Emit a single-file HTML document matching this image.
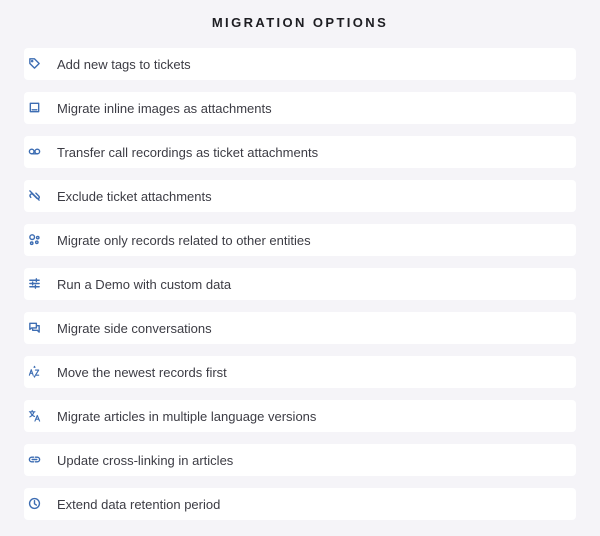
<!DOCTYPE html>
<html><head><style>
body{margin:0;width:600px;height:536px;background:#f5f4f8;font-family:"Liberation Sans",sans-serif;overflow:hidden}
h1{margin:0;position:absolute;top:15px;left:0;width:600px;text-align:center;font-size:13px;font-weight:bold;letter-spacing:2.4px;color:#1d1d22}
.row{position:absolute;left:24px;width:552px;height:32px;background:#fff;border-radius:4px}
.row svg{position:absolute;left:4px;top:9px;width:13px;height:13px}
.row span{position:absolute;left:33px;top:9px;font-size:13px;color:#3c3c44}
svg *{stroke:#3d6db3;fill:none;stroke-width:1.5;stroke-linecap:round;stroke-linejoin:round}
</style></head><body>
<h1>MIGRATION OPTIONS</h1>
<div class="row" style="top:48px"><svg viewBox="0 0 14 14"><path d="M2 2h5l5 5-5 5-5-5z"/><circle cx="4.5" cy="4.5" r=".6"/></svg><span>Add new tags to tickets</span></div>
<div class="row" style="top:92px"><svg viewBox="0 0 14 14"><rect x="2.5" y="2.5" width="9" height="9"/><path d="M4.5 9.5h5" /></svg><span>Migrate inline images as attachments</span></div>
<div class="row" style="top:136px"><svg viewBox="0 0 14 14"><circle cx="4" cy="7" r="2.5"/><circle cx="10" cy="7" r="2.5"/><path d="M4 9.5h6"/></svg><span>Transfer call recordings as ticket attachments</span></div>
<div class="row" style="top:180px"><svg viewBox="0 0 14 14"><path d="M3 9c-2-2 0-5 2.5-3l4 4c2 1.5 3.5-1 2-2.5l-3-3M2 2l10 10"/></svg><span>Exclude ticket attachments</span></div>
<div class="row" style="top:224px"><svg viewBox="0 0 14 14"><circle cx="4.5" cy="4.5" r="2.5"/><circle cx="10.5" cy="5" r="1.3"/><circle cx="4" cy="11" r="1.3"/><circle cx="9.5" cy="10" r="1.3"/></svg><span>Migrate only records related to other entities</span></div>
<div class="row" style="top:268px"><svg viewBox="0 0 14 14"><path d="M2 3.5h10M2 7h10M2 10.5h10M9 2v3M5 5.5v3M8 9v3"/></svg><span>Run a Demo with custom data</span></div>
<div class="row" style="top:312px"><svg viewBox="0 0 14 14"><path d="M2 2.5h7v5H4L2 9zM10 5h2v7l-2-2H5V9"/></svg><span>Migrate side conversations</span></div>
<div class="row" style="top:356px"><svg viewBox="0 0 14 14"><path d="M1.5 11l2-6 2 6M2.3 9h2.4M8 5.5h3.5L8 11h3.5M6.5 2.5l.5-1 .5 1M6.5 12l.5 1 .5-1" style="stroke-width:1.2"/></svg><span>Move the newest records first</span></div>
<div class="row" style="top:400px"><svg viewBox="0 0 14 14"><path d="M1.5 3h6M4.5 1.5V3M2.5 3c1 3 3 4.5 4.5 5M6.5 3c-.8 2.5-2.5 4.5-4.5 5.5M7.5 13l2.5-6 2.5 6M8.3 11h3.4" style="stroke-width:1.2"/></svg><span>Migrate articles in multiple language versions</span></div>
<div class="row" style="top:444px"><svg viewBox="0 0 14 14"><path d="M6 4.5H4a2.5 2.5 0 000 5h2M8 4.5h2a2.5 2.5 0 010 5H8M4.5 7h5"/></svg><span>Update cross-linking in articles</span></div>
<div class="row" style="top:488px"><svg viewBox="0 0 14 14"><circle cx="7" cy="7" r="5.3"/><path d="M7 4v3.3l2 1.4"/></svg><span>Extend data retention period</span></div>
</body></html>
